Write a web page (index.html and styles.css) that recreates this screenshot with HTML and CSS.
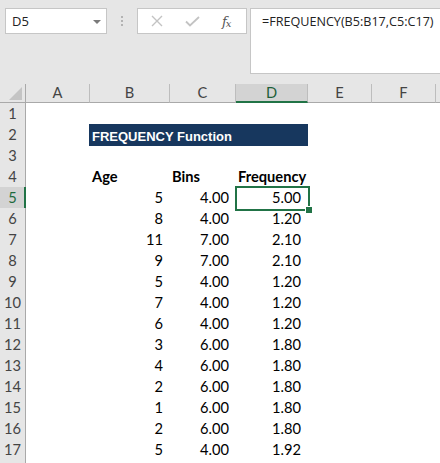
FILE: index.html
```html
<!DOCTYPE html>
<html>
<head>
<meta charset="utf-8">
<link rel="stylesheet" href="styles.css">
</head>
<body>
<div class="toolbar">
  <div class="namebox"><span class="ref">D5</span><span class="caret"></span></div>
  <div class="grip"><i></i><i></i><i></i></div>
  <div class="fxbox">
    <svg class="ico" width="12" height="12" viewBox="0 0 12 12"><path d="M1 1L11 11M11 1L1 11" stroke="#c3c3c3" stroke-width="1.4" fill="none"/></svg>
    <svg class="ico" width="15" height="11" viewBox="0 0 15 11"><path d="M1 5.5L5 9.5L14 1" stroke="#c3c3c3" stroke-width="1.8" fill="none"/></svg>
    <span class="fx"><i>f</i><i class="x">x</i></span>
  </div>
  <div class="formula">=FREQUENCY(B5:B17,C5:C17)</div>
</div>
<div class="sheet">
  <div class="hrow">
    <div class="corner"><svg width="13" height="13" viewBox="0 0 13 13"><path d="M13 0V13H0Z" fill="#c4c4c4"/></svg></div>
    <div class="ch">A</div><div class="ch">B</div><div class="ch">C</div><div class="ch sel">D</div><div class="ch">E</div><div class="ch">F</div><div class="ch last"></div>
  </div>
  <div class="row"><div class="rh">1</div></div>
  <div class="row"><div class="rh">2</div><div class="c"></div><div class="title">FREQUENCY Function</div></div>
  <div class="row"><div class="rh">3</div></div>
  <div class="row"><div class="rh">4</div><div class="c"></div><div class="c hd">Age</div><div class="c hd">Bins</div><div class="c hd">Frequency</div></div>
  <div class="row"><div class="rh sel">5</div><div class="c"></div><div class="c n">5</div><div class="c n">4.00</div><div class="c n active">5.00</div></div>
  <div class="row"><div class="rh">6</div><div class="c"></div><div class="c n">8</div><div class="c n">4.00</div><div class="c n">1.20</div></div>
  <div class="row"><div class="rh">7</div><div class="c"></div><div class="c n">11</div><div class="c n">7.00</div><div class="c n">2.10</div></div>
  <div class="row"><div class="rh">8</div><div class="c"></div><div class="c n">9</div><div class="c n">7.00</div><div class="c n">2.10</div></div>
  <div class="row"><div class="rh">9</div><div class="c"></div><div class="c n">5</div><div class="c n">4.00</div><div class="c n">1.20</div></div>
  <div class="row"><div class="rh">10</div><div class="c"></div><div class="c n">7</div><div class="c n">4.00</div><div class="c n">1.20</div></div>
  <div class="row"><div class="rh">11</div><div class="c"></div><div class="c n">6</div><div class="c n">4.00</div><div class="c n">1.20</div></div>
  <div class="row"><div class="rh">12</div><div class="c"></div><div class="c n">3</div><div class="c n">6.00</div><div class="c n">1.80</div></div>
  <div class="row"><div class="rh">13</div><div class="c"></div><div class="c n">4</div><div class="c n">6.00</div><div class="c n">1.80</div></div>
  <div class="row"><div class="rh">14</div><div class="c"></div><div class="c n">2</div><div class="c n">6.00</div><div class="c n">1.80</div></div>
  <div class="row"><div class="rh">15</div><div class="c"></div><div class="c n">1</div><div class="c n">6.00</div><div class="c n">1.80</div></div>
  <div class="row"><div class="rh">16</div><div class="c"></div><div class="c n">2</div><div class="c n">6.00</div><div class="c n">1.80</div></div>
  <div class="row"><div class="rh">17</div><div class="c"></div><div class="c n">5</div><div class="c n">4.00</div><div class="c n">1.92</div></div>
  <div class="row"><div class="rh"></div></div>
</div>
</body>
</html>
```

FILE: styles.css
```css
* { box-sizing: border-box; }
html, body { margin: 0; padding: 0; }
body {
  width: 440px;
  height: 463px;
  overflow: hidden;
  background: #e6e6e6;
  font-family: Lato, "Liberation Sans", sans-serif;
}
.toolbar {
  display: flex;
  align-items: flex-start;
  height: 84px;
  padding: 8px 0 0 5px;
}
.namebox {
  width: 102px;
  height: 26px;
  background: #fff;
  border: 1px solid #c6c6c6;
  display: flex;
  align-items: center;
  justify-content: space-between;
  padding: 0 5px 0 6px;
  font-family: "Open Sans", sans-serif;
  font-size: 13px;
  color: #222;
}
.caret {
  width: 0; height: 0;
  border-left: 4px solid transparent;
  border-right: 4px solid transparent;
  border-top: 4px solid #7a7a7a;
  margin-top: 1px;
}
.grip {
  width: 30px;
  height: 26px;
  display: flex;
  flex-direction: column;
  align-items: center;
  justify-content: center;
  gap: 2px;
}
.grip i {
  display: block;
  width: 2px;
  height: 2px;
  background: #b3b3b3;
}
.fxbox {
  width: 110px;
  height: 26px;
  background: #fff;
  border: 1px solid #c6c6c6;
  display: flex;
  align-items: center;
  padding-left: 13px;
}
.fxbox .ico:first-child { margin-right: 22px; }
.fxbox .ico:nth-child(2) { margin-right: 22px; margin-top: 1px; }
.fx {
  font-family: "DejaVu Serif", "Liberation Serif", serif;
  font-style: italic;
  color: #555;
  font-size: 13px;
  letter-spacing: -1px;
}
.fx i { font-style: italic; }
.fx .x { font-size: 10px; position: relative; top: 1px; }
.formula {
  flex: 1;
  height: 66px;
  margin-left: 3px;
  background: #fff;
  border: 1px solid #c6c6c6;
  border-right: none;
  padding: 4px 0 0 11px;
  font-family: "Open Sans", sans-serif;
  font-size: 12.6px;
  color: #222;
  white-space: nowrap;
}
.sheet { background: #fff; }
.hrow, .row {
  display: grid;
  grid-template-columns: 26px 64px 80px 66px 72px 64px 64px 1fr;
}
.hrow {
  height: 19px;
  background: #e6e6e6;
}
.corner {
  border-right: 1px solid #a9a9a9;
  border-bottom: 1px solid #a9a9a9;
  display: flex;
  align-items: flex-end;
  justify-content: flex-end;
  padding: 0 3px 2px 0;
}
.corner svg { display: block; }
.ch {
  border-right: 1px solid #bdbdbd;
  border-bottom: 1px solid #a9a9a9;
  text-align: center;
  font-size: 14.67px;
  line-height: 18px;
  color: #444;
}
.ch.last { border-right: none; }
.ch.sel {
  background: #d3d3d3;
  color: #1d5f38;
  border-bottom: 2px solid #217346;
  line-height: 17px;
}
.row { height: 21px; }
.rh {
  background: #e6e6e6;
  border-right: 1px solid #a9a9a9;
  border-bottom: 1px solid #cfcfcf;
  text-align: center;
  font-size: 14.67px;
  line-height: 21px;
  color: #444;
}
.rh.sel {
  background: #d3d3d3;
  color: #1d6b3e;
  border-right: 2px solid #217346;
  padding-left: 1px;
}
.c {
  font-size: 14.67px;
  line-height: 21px;
  color: #000;
  white-space: nowrap;
}
.c.n { text-align: right; padding-right: 7px; }
.c.hd { font-weight: bold; padding-left: 2px; }
.title {
  grid-column: 3 / 6;
  margin-left: -1px;
  background: #17375e;
  color: #fff;
  font-family: "Liberation Sans", Arial, sans-serif;
  font-weight: bold;
  font-size: 13px;
  line-height: 19px;
  padding: 3px 0 0 3px;
}
.active { position: relative; }
.active::after {
  content: "";
  position: absolute;
  top: -1px; left: -1px; right: -2px; bottom: -2px;
  border: 2px solid #217346;
}
.active::before {
  content: "";
  position: absolute;
  right: -4px;
  bottom: -4px;
  width: 6px;
  height: 6px;
  background: #217346;
  border-left: 1px solid #fff;
  border-top: 1px solid #fff;
  z-index: 1;
}
```
